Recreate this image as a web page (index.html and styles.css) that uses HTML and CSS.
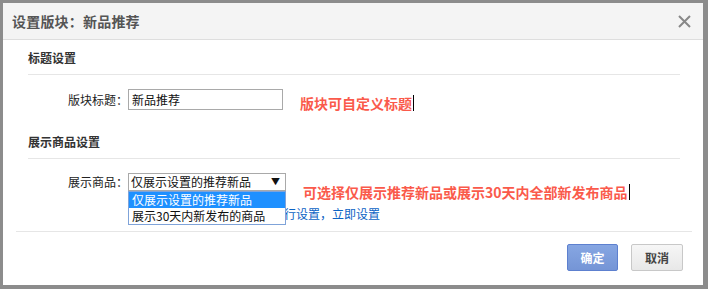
FILE: index.html
```html
<!DOCTYPE html>
<html lang="zh-CN">
<head>
  <meta charset="UTF-8">
  <title>设置版块</title>
  <link rel="stylesheet" href="styles.css">
</head>
<body>
  <div class="dialog">
    <div class="dialog-header">
      <span class="dialog-title">设置版块：新品推荐</span>
      <span class="close-btn">
        <svg width="13" height="13" viewBox="0 0 13 13">
          <path d="M1 1 L12 12 M12 1 L1 12" stroke="#888" stroke-width="2" fill="none"/>
        </svg>
      </span>
    </div>

    <div class="dialog-body">
      <div class="section-title">标题设置</div>
      <div class="form-row">
        <label class="form-label">版块标题：</label>
        <div class="text-input">新品推荐</div>
        <span class="tip tip-title">版块可自定义标题<i class="caret"></i></span>
      </div>

      <div class="section-title">展示商品设置</div>
      <div class="form-row">
        <label class="form-label">展示商品：</label>
        <div class="select-wrap">
          <div class="select">
            <span>仅展示设置的推荐新品</span>
            <span class="arrow">▼</span>
          </div>
          <ul class="options">
            <li class="selected">仅展示设置的推荐新品</li>
            <li>展示30天内新发布的商品</li>
          </ul>
        </div>
        <span class="tip tip-goods">可选择仅展示推荐新品或展示30天内全部新发布商品<i class="caret"></i></span>
      </div>
      <div class="hint-row">若尚未设置推荐新品，请先进行设置，<a href="#">立即设置</a></div>
    </div>

    <div class="dialog-footer">
      <button class="btn btn-ok">确定</button>
      <button class="btn btn-cancel">取消</button>
    </div>
  </div>
</body>
</html>
```

FILE: styles.css
```css
body {
  margin: 0;
  padding: 3px;
  background-color: #8c8c8c;
  font-family: "Noto Sans CJK SC", "Liberation Sans", sans-serif;
  font-size: 12px;
  color: #222;
}
.dialog {
  width: 700px;
  height: 282px;
  background: #fff;
  display: flex;
  flex-direction: column;
}
.dialog-header {
  flex: none;
  height: 36px;
  background: #f4f4f4;
  border-bottom: 1px solid #dedede;
  display: flex;
  align-items: center;
  justify-content: space-between;
  padding: 0 12px 0 9px;
}
.dialog-title {
  font-size: 14px;
  font-weight: bold;
  color: #555;
  letter-spacing: 0.2px;
}
.close-btn {
  display: flex;
  margin-top: 1px;
}
.dialog-body {
  padding: 0 23px 0 25px;
  flex: 1;
}
.section-title {
  margin-top: 8px;
  line-height: 20px;
  padding-bottom: 6px;
  border-bottom: 1px solid #e6e6e6;
  font-weight: bold;
  color: #333;
}
.section-title + .form-row {
  margin-top: 14px;
}
.form-row + .section-title {
  margin-top: 21px;
}
.form-row {
  display: flex;
  align-items: flex-start;
}
.form-label {
  width: 60px;
  margin-left: 40px;
  line-height: 21px;
  color: #222;
}
.text-input {
  width: 150px;
  height: 19px;
  line-height: 19px;
  border: 1px solid #a9a9a9;
  padding: 0 0 0 3px;
  color: #111;
}
.tip {
  font-size: 14px;
  font-weight: bold;
  color: #fa5a4b;
  line-height: 16px;
  display: flex;
  align-items: center;
}
.tip-title {
  margin: 6px 0 0 17px;
}
.tip-goods {
  margin: 11px 0 0 17px;
}
.caret {
  display: inline-block;
  width: 1px;
  height: 16px;
  background: #000;
  margin-left: 1px;
}
.select-wrap {
  position: relative;
}
.select {
  width: 154px;
  height: 16px;
  line-height: 16px;
  border: 1px solid #a9a9a9;
  padding: 0 0 0 2px;
  display: flex;
  justify-content: space-between;
  color: #111;
}
.form-row:has(.select-wrap) .form-label {
  line-height: 18px;
}
.arrow {
  font-size: 9px;
  margin-right: 5px;
}
.options {
  position: absolute;
  top: 18px;
  left: 0;
  width: 156px;
  margin: 0;
  padding: 0;
  list-style: none;
  border: 1px solid #7fa3d9;
  background: #fff;
  z-index: 1;
}
.options li {
  height: 16px;
  line-height: 16px;
  padding-left: 3px;
  color: #111;
}
.options li.selected {
  background: #1e90ff;
  color: #fff;
}
.hint-row {
  margin: 6px 0 0 100px;
  line-height: 16px;
  color: #0b63c4;
}
.hint-row a {
  color: #0b63c4;
  text-decoration: none;
}
.dialog-footer {
  flex: none;
  margin: 0 11px 0 13px;
  border-top: 1px solid #e6e6e6;
  height: 41px;
  display: flex;
  justify-content: flex-end;
  align-items: flex-start;
  padding: 12px 9px 0 0;
  gap: 13px;
}
.btn {
  width: 52px;
  height: 27px;
  font-family: inherit;
  font-size: 12px;
  font-weight: bold;
  border-radius: 2px;
  padding: 0;
  cursor: pointer;
}
.btn-ok {
  width: 51px;
  background: linear-gradient(#86a6e2, #7595d6);
  border: 1px solid #5d80cf;
  color: #fff;
}
.btn-cancel {
  background: linear-gradient(#f6f6f6, #e8e8e8);
  border: 1px solid #c8c8c8;
  color: #444;
}
```
